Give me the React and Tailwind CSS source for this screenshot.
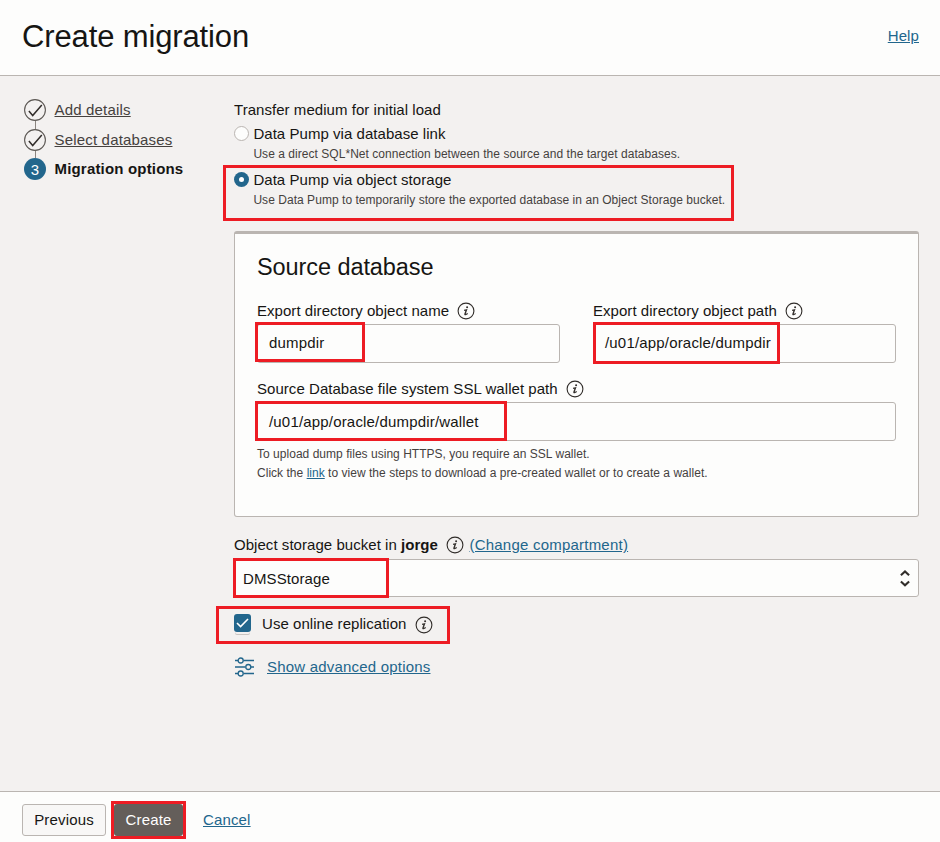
import React from "react";

function InfoIcon({ className = "" }) {
  return (
    <svg className={`block h-[18px] w-[18px] shrink-0 ${className}`} viewBox="0 0 18 18" fill="none">
      <circle cx="9" cy="9" r="7.9" stroke="#312d2a" strokeWidth="1.1" />
      <circle cx="10.1" cy="5.3" r="1" fill="#312d2a" />
      <path d="M7.1 8.3 9.5 7.8 7.9 12.2Q7.8 13.3 10.7 11.5" stroke="#312d2a" strokeWidth="1.3" />
    </svg>
  );
}

function CheckStep() {
  return (
    <svg className="block h-[22px] w-[22px]" viewBox="0 0 22 22" fill="none">
      <circle cx="11" cy="11" r="10.4" stroke="#5c5854" strokeWidth="1.1" />
      <path d="M4.9 12 8.7 16.5 17.8 6" stroke="#312d2a" strokeWidth="1.5" />
    </svg>
  );
}

function Label({ children }) {
  return <div className="h-5 leading-5 tracking-[0.045px] whitespace-nowrap">{children}</div>;
}

function Field({ label, value, className = "", valueClass = "" }) {
  return (
    <div className={className}>
      <div className="flex h-[23px] items-start gap-[8.3px]">
        <Label>{label}</Label>
        <InfoIcon className="mt-px" />
      </div>
      <div className="flex h-[39px] items-start rounded-[3px] border border-[#bab5b1] bg-[#fdfdfc] pl-[11px]">
        <div className={`leading-5 tracking-[0.18px] whitespace-nowrap ${valueClass}`}>{value}</div>
      </div>
    </div>
  );
}

function RadioOption({ title, hint, checked }) {
  return (
    <div className="flex h-[46px] gap-1">
      {checked ? (
        <span className="mt-[2px] flex h-[15px] w-[15px] items-center justify-center rounded-full bg-[#22668c]">
          <span className="h-[5px] w-[5px] rounded-full bg-white" />
        </span>
      ) : (
        <span className="mt-[2px] h-[15px] w-[15px] rounded-full border border-[#bab5b1] bg-[#fdfdfc]" />
      )}
      <div className="pl-[0.4px]">
        <Label>{title}</Label>
        <div className="mt-[2px] h-4 text-[12px] leading-4 tracking-[0.042px] whitespace-nowrap text-[#45413e]">{hint}</div>
      </div>
    </div>
  );
}

function Highlight({ className }) {
  return <div className={`pointer-events-none absolute border-3 border-[#ed1c24] ${className}`} />;
}

export default function App() {
  return (
    <div className="relative flex h-[842px] w-[940px] flex-col overflow-hidden bg-[#f3f1f0] font-['Liberation_Sans',Arial,sans-serif] text-[15px] text-[#161513]">
      <header className="flex h-[76px] shrink-0 items-center justify-between border-b border-[#bab5b1] bg-[#fdfdfc] pr-[21px] pl-[22px]">
        <h1 className="mt-[-2px] text-[31px] leading-9 tracking-[-0.13px] whitespace-nowrap">Create migration</h1>
        <a className="mt-[-4px] leading-5 tracking-[0.1px] text-[#22668c] underline">Help</a>
      </header>

      <div className="flex flex-1">
        <nav className="flex w-[234px] shrink-0 pt-[23px] pl-6">
          <div className="flex flex-col items-center">
            <CheckStep />
            <span className="h-2 w-px bg-[#8b8580]" />
            <CheckStep />
            <span className="h-[7px] w-px bg-[#8b8580]" />
            <span className="flex h-[22px] w-[22px] items-center justify-center rounded-full bg-[#22668c] text-[15px] leading-none text-white">3</span>
          </div>
          <div className="ml-[8.5px] tracking-[0.18px] whitespace-nowrap text-[#45413e]">
            <div className="mt-px h-[30px] leading-5 underline">Add details</div>
            <div className="h-[29px] leading-5 underline">Select databases</div>
            <div className="leading-5 font-bold text-[#161513]">Migration options</div>
          </div>
        </nav>

        <main className="w-[685px] pt-6">
          <div className="h-6">
            <Label>Transfer medium for initial load</Label>
          </div>
          <RadioOption
            title="Data Pump via database link"
            hint="Use a direct SQL*Net connection between the source and the target databases."
          />
          <RadioOption
            checked
            title="Data Pump via object storage"
            hint="Use Data Pump to temporarily store the exported database in an Object Storage bucket."
          />

          <section className="mt-[15px] h-[286px] rounded-[3px] border border-t-3 border-[#bab5b1] bg-[#fdfdfc] px-[22px] pt-[19px]">
            <h2 className="h-7 text-[23.5px] leading-7 tracking-[-0.08px] whitespace-nowrap">Source database</h2>
            <div className="mt-5 flex h-[62px] items-end justify-between">
              <Field className="w-[303px]" label="Export directory object name" value="dumpdir" valueClass="pt-2" />
              <Field className="w-[303px]" label="Export directory object path" value="/u01/app/oracle/dumpdir" valueClass="pt-2" />
            </div>
            <Field
              className="mt-4"
              label="Source Database file system SSL wallet path"
              value="/u01/app/oracle/dumpdir/wallet"
              valueClass="pt-[9px]"
            />
            <div className="mt-1 text-[12px] leading-[19px] tracking-[0.027px] whitespace-nowrap text-[#45413e]">
              <p>To upload dump files using HTTPS, you require an SSL wallet.</p>
              <p>
                Click the <a className="text-[#22668c] underline">link</a> to view the steps to download a pre-created wallet or to create a wallet.
              </p>
            </div>
          </section>

          <div className="mt-[18px] flex h-6 items-start">
            <Label>
              Object storage bucket in <b>jorge</b>
            </Label>
            <InfoIcon className="mt-px ml-[8.5px]" />
            <a className="ml-[5px] leading-5 tracking-[0.22px] text-[#22668c] underline">(Change compartment)</a>
          </div>
          <div className="flex h-[38px] items-center justify-between rounded-[3px] border border-[#bab5b1] bg-[#fdfdfc] pr-2 pl-2">
            <div className="pt-[2px] leading-5 tracking-[0.1px]">DMSStorage</div>
            <svg className="h-[18px] w-[10px]" viewBox="0 0 10 18" fill="none" stroke="#312d2a" strokeWidth="2.1">
              <path d="M.9 6.3 5 2.5 9.1 6.3M.9 12.5 5 16.3 9.1 12.5" />
            </svg>
          </div>

          <div className="mt-[17px] flex h-5 items-center">
            <span className="mt-[-2px] flex h-[18px] w-[17px] items-center justify-center rounded-[3px] bg-[#22668c] shadow-[0_3px_0_-1px_#f3f1f0,0_4px_0_-1px_#c9c5c2]">
              <svg className="h-3 w-[13px]" viewBox="0 0 13 12" fill="none" stroke="white" strokeWidth="1.6">
                <path d="M1 6 4.6 9.6 12 2" />
              </svg>
            </span>
            <span className="ml-[11px] leading-5 tracking-[0.05px]">Use online replication</span>
            <InfoIcon className="mt-px ml-[8.3px]" />
          </div>

          <div className="mt-[23px] flex h-5 items-center text-[#22668c]">
            <svg className="h-5 w-5" viewBox="0 0 20 20" fill="none" stroke="currentColor" strokeWidth="1.3">
              <path d="M1 3.5H4M9.5 3.5H20M1 10H11.5M17 10H20M1 16.5H4M9.5 16.5H20" />
              <circle cx="6.7" cy="3.5" r="2.5" />
              <circle cx="14.3" cy="10" r="2.5" />
              <circle cx="6.7" cy="16.5" r="2.5" />
            </svg>
            <a className="ml-[13px] leading-5 tracking-[0.2px] underline">Show advanced options</a>
          </div>
        </main>
      </div>

      <footer className="flex h-[51px] shrink-0 items-start border-t border-[#bab5b1] bg-[#fdfdfc] pt-3 pl-[22px] tracking-[0.15px]">
        <button className="h-8 w-[84px] rounded-[3px] border border-[#bab5b1] bg-[#f8f7f6]">Previous</button>
        <button className="ml-2 h-8 w-[69px] rounded-[3px] bg-[#645e5a] text-white">Create</button>
        <a className="ml-5 leading-8 text-[#22668c] underline">Cancel</a>
      </footer>

      <Highlight className="top-[165px] left-[223px] h-[56px] w-[511px]" />
      <Highlight className="top-[322px] left-[255px] h-[40px] w-[110px]" />
      <Highlight className="top-[322px] left-[593px] h-[42px] w-[187px]" />
      <Highlight className="top-[401px] left-[255px] h-[40px] w-[252px]" />
      <Highlight className="top-[558px] left-[233px] h-[40px] w-[156px]" />
      <Highlight className="top-[606px] left-[216px] h-[38px] w-[234px]" />
      <Highlight className="top-[801px] left-[111px] h-[38px] w-[75px]" />
    </div>
  );
}
